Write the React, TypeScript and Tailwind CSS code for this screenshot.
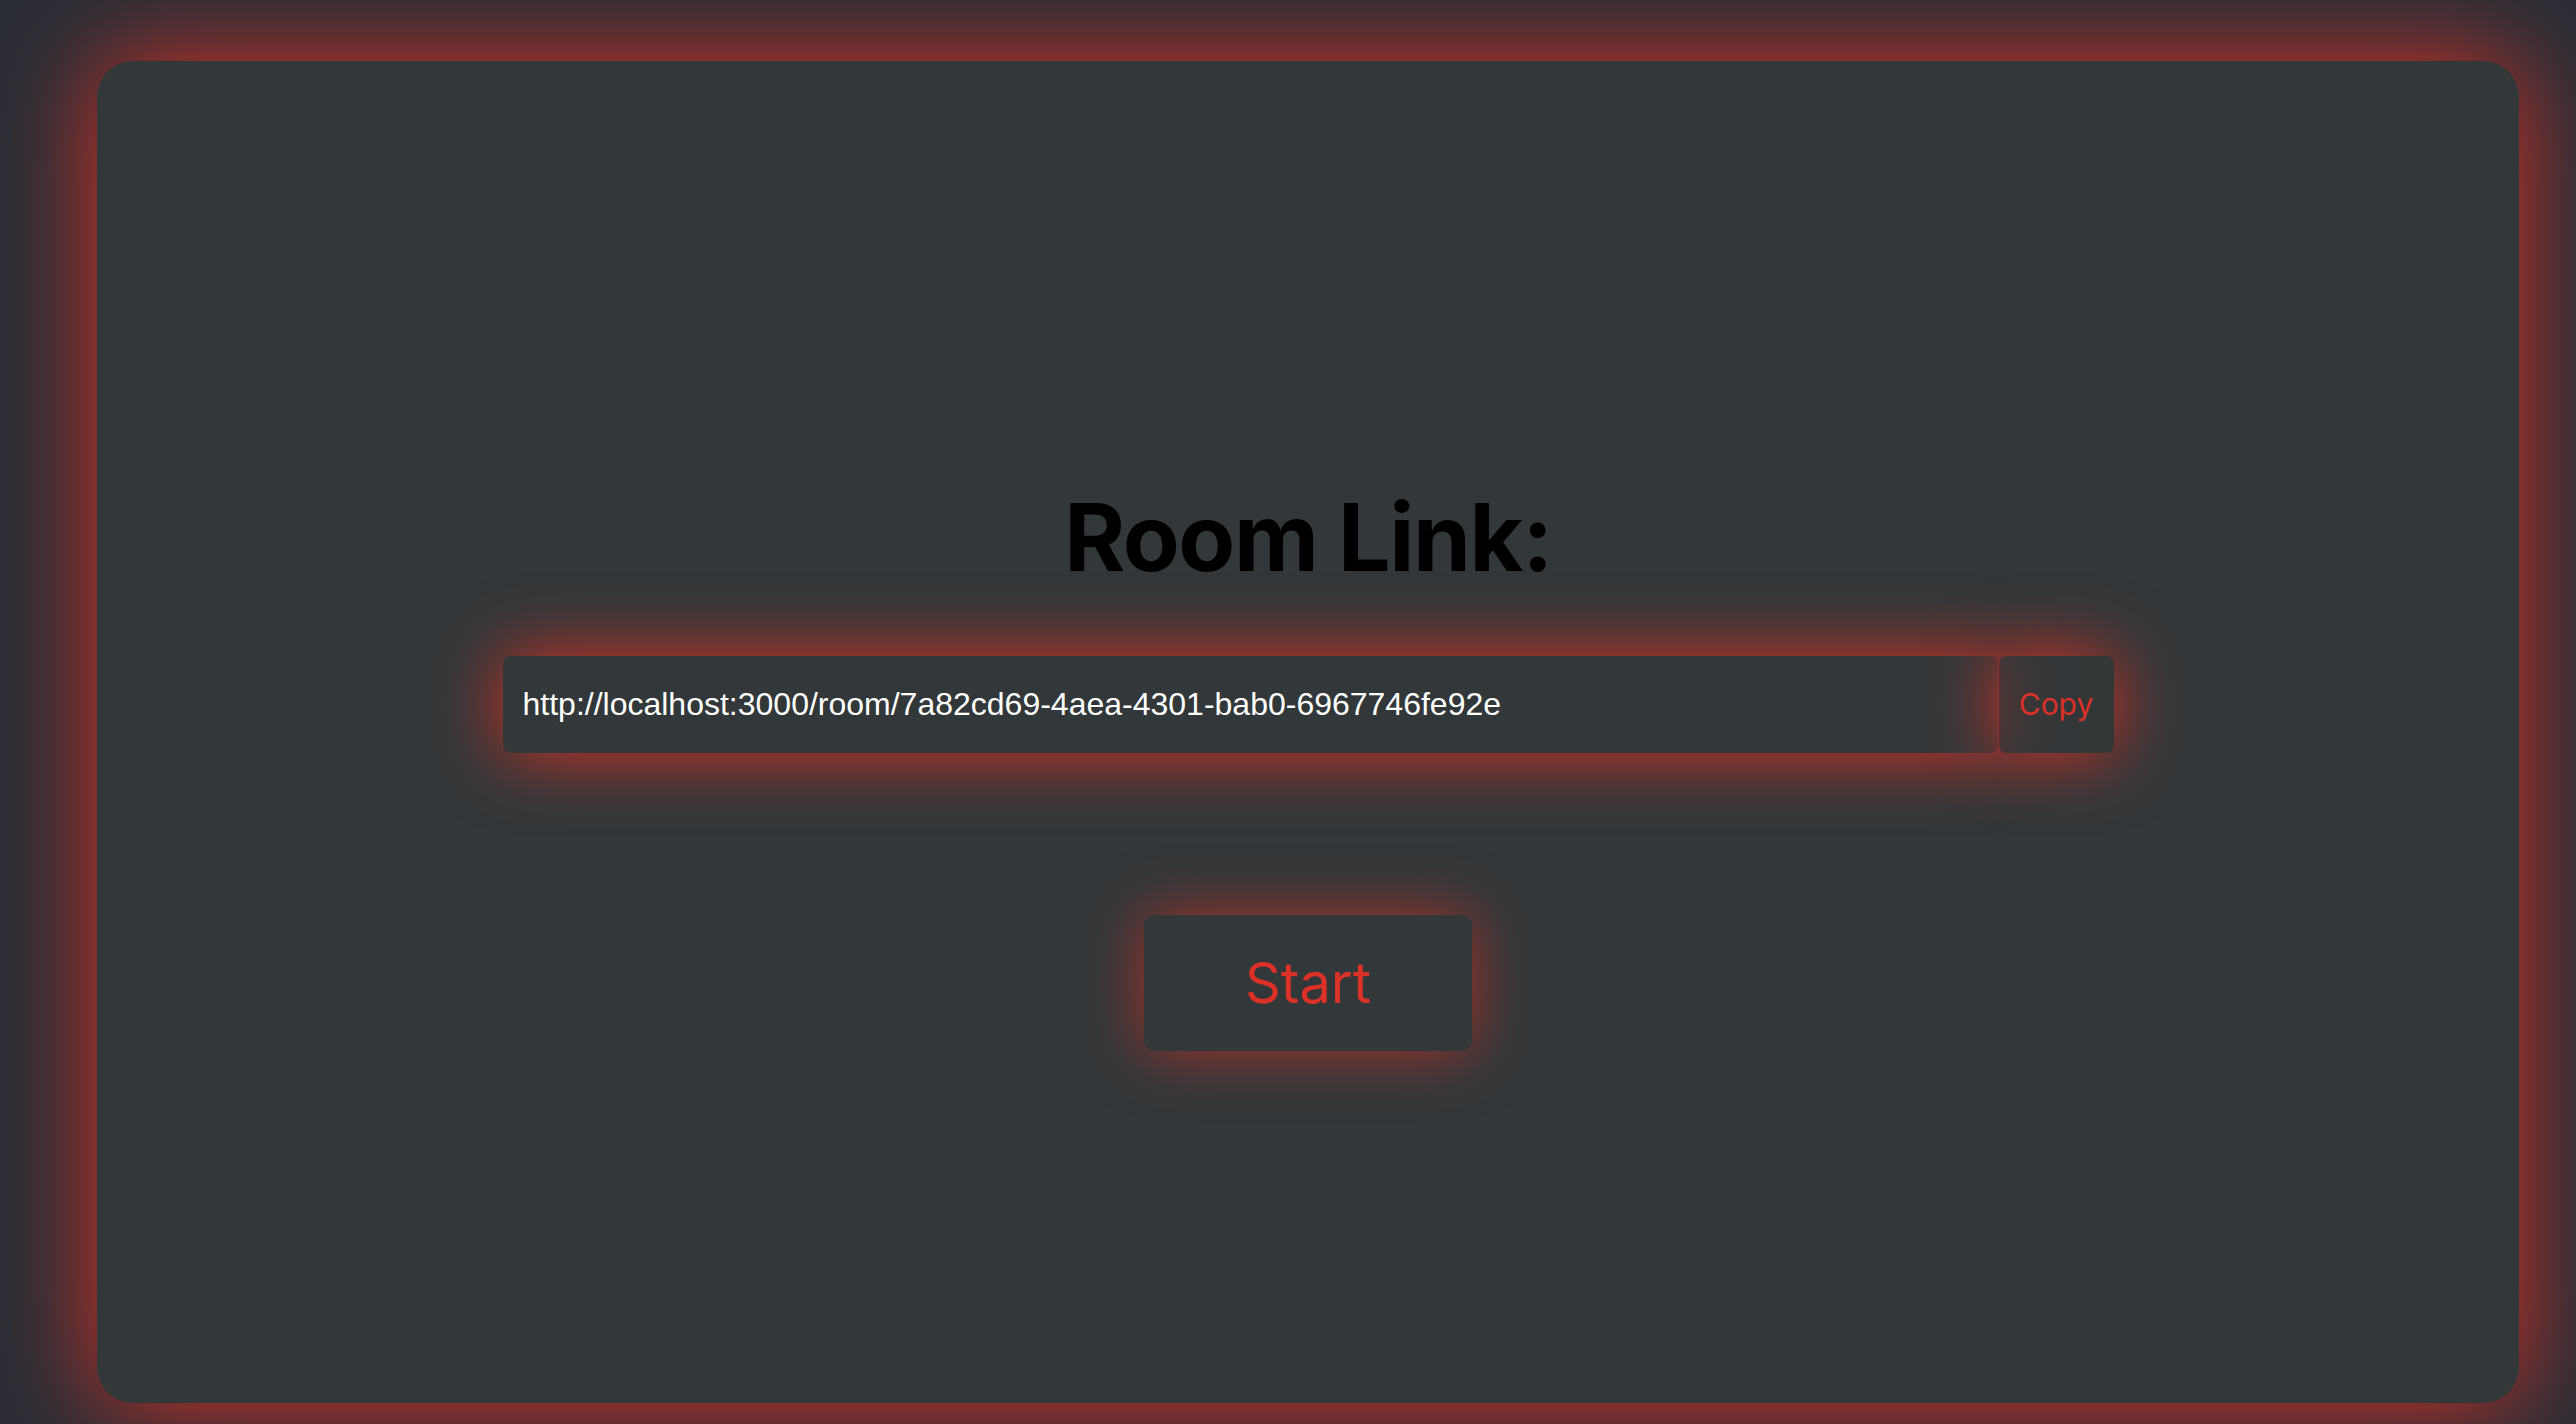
import { useState } from 'react'

const roomUrl = 'http://localhost:3000/room/7a82cd69-4aea-4301-bab0-6967746fe92e'

export default function App() {
  const [copied, setCopied] = useState(false)

  return (
    <div className="flex h-[1424px] w-full bg-[#2b2e36] pb-[21px] pl-[97px] pr-[57px] pt-[61px] font-['Inter',sans-serif]">
      <main className="flex flex-1 flex-col items-center rounded-[36px] bg-[#323739] pt-[430px] shadow-[0_0_100px_#dc3126]">
        <h1 className="text-[93px] font-bold leading-none tracking-[-0.015em] text-black">Room Link:</h1>

        <div className="mt-[72px] flex items-stretch gap-[1px]">
          <input
            readOnly
            value={roomUrl}
            className="h-[97px] w-[1495px] rounded-lg bg-[#323739] pl-[20px] font-['Liberation_Sans',Arial,sans-serif] text-[32px] text-white shadow-[0_0_70px_#dc3126] outline-none"
          />
          <button
            onClick={() => setCopied(true)}
            className="w-[115px] rounded-lg bg-[#323739]/60 text-[30px] text-[#dc3126] shadow-[0_0_70px_#dc3126]"
          >
            {copied ? 'Copy' : 'Copy'}
          </button>
        </div>

        <button className="mt-[162px] h-[136px] w-[328px] rounded-[10px] bg-[#323739] text-[56px] text-[#dc3126] shadow-[0_0_60px_rgba(220,49,38,0.7)]">
          Start
        </button>
      </main>
    </div>
  )
}
